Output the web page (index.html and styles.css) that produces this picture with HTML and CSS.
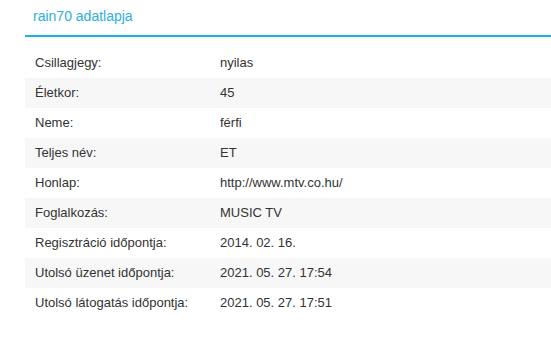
FILE: index.html
```html
<!DOCTYPE html>
<html lang="hu">
<head>
<meta charset="utf-8">
<link rel="stylesheet" href="styles.css">
</head>
<body>
<div class="panel">
  <div class="panel-head">rain70 adatlapja</div>
  <table class="info">
    <tr><td class="k">Csillagjegy:</td><td>nyilas</td></tr>
    <tr><td class="k">Életkor:</td><td>45</td></tr>
    <tr><td class="k">Neme:</td><td>férfi</td></tr>
    <tr><td class="k">Teljes név:</td><td>ET</td></tr>
    <tr><td class="k">Honlap:</td><td>http://www.mtv.co.hu/</td></tr>
    <tr><td class="k">Foglalkozás:</td><td>MUSIC TV</td></tr>
    <tr><td class="k">Regisztráció időpontja:</td><td>2014. 02. 16.</td></tr>
    <tr><td class="k">Utolsó üzenet időpontja:</td><td>2021. 05. 27. 17:54</td></tr>
    <tr><td class="k">Utolsó látogatás időpontja:</td><td>2021. 05. 27. 17:51</td></tr>
  </table>
</div>
</body>
</html>
```
FILE: styles.css
```css
html, body {
  margin: 0;
  padding: 0;
  background: #fff;
}
body {
  font-family: "Liberation Sans", Arial, sans-serif;
  color: #333;
  overflow: hidden;
}
.panel {
  margin-left: 25px;
}
.panel-head {
  font-size: 14px;
  line-height: 16px;
  color: #2eaee0;
  padding: 8px 0 11px 8px;
  border-bottom: 2px solid #1cb2e2;
}
.info {
  margin-top: 11px;
  width: 100%;
  border-collapse: collapse;
  font-size: 13px;
}
.info td {
  padding: 7px 10px;
  line-height: 16px;
  white-space: nowrap;
}
.info td.k {
  width: 165px;
}
.info tr:nth-child(even) td {
  background: #f7f7f7;
}
```
